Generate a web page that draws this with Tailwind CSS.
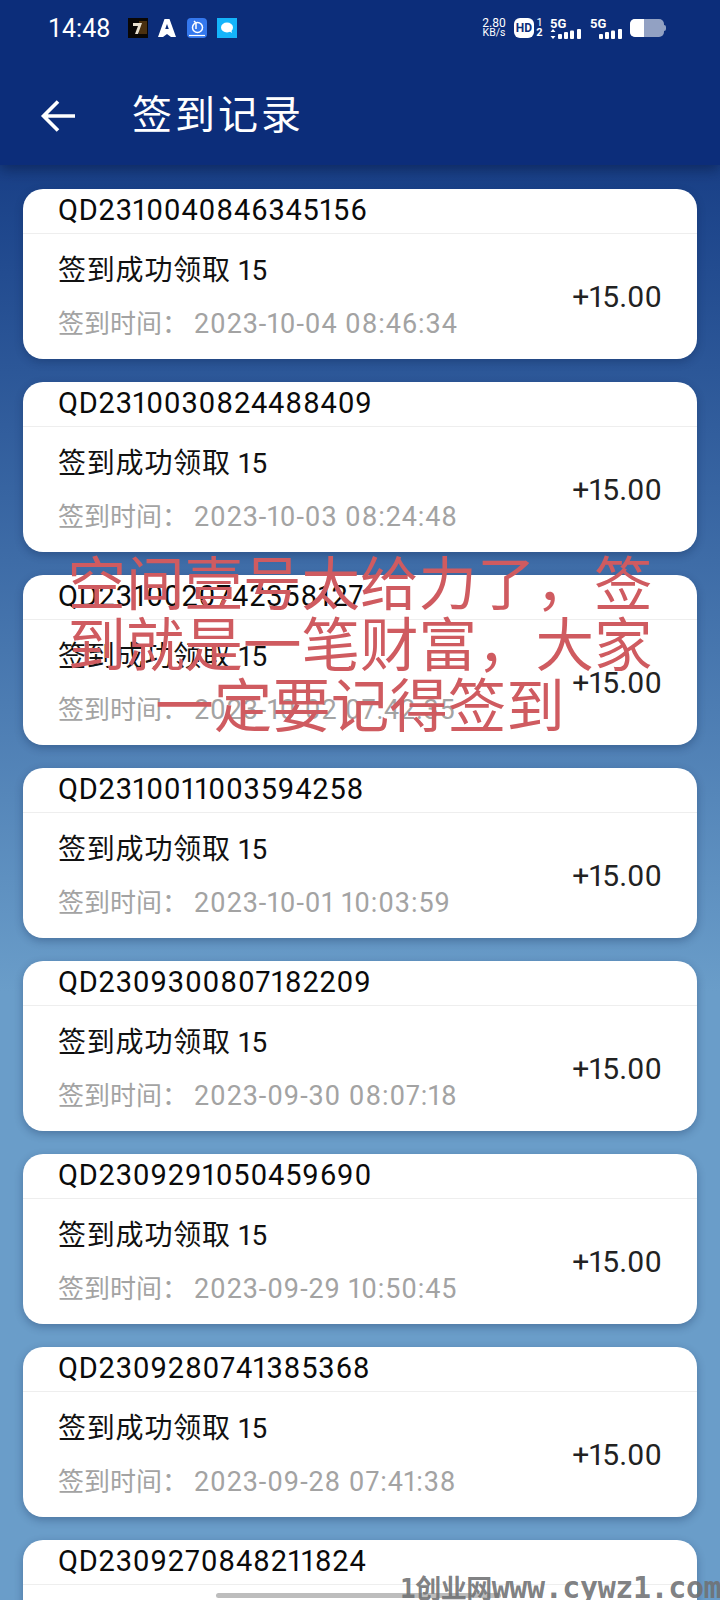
<!doctype html>
<html lang="zh"><head><meta charset="utf-8"><script src="https://cdn.jsdelivr.net/npm/@tailwindcss/browser@4"></script></head>
<body class="m-0">
<div class="relative w-[720px] h-[1600px] overflow-hidden bg-gradient-to-b from-[#0c2d7a] via-[#6a9dc9] via-[62%] to-[#6a9dc9] font-['Roboto','Noto_Sans_CJK_SC',sans-serif]">
  <header class="relative z-10 h-[165px] bg-[#0c2d7a] shadow-[0_4px_14px_rgba(5,20,60,0.55)] text-white">
    <div class="h-[56px] flex items-center pl-[48px] pr-[54px]">
      <span class="text-[25px] w-[80px] leading-none">14:48</span>
      <div class="flex items-center gap-[10px]">
        <svg width="20" height="20" viewBox="0 0 20 20"><rect width="20" height="20" fill="#0a0705"/><rect x="11" y="3" width="8" height="13" fill="#4a3010"/><path d="M5 5h9l-4 11H7l3-8H5z" fill="#e9e0cf"/></svg>
        <svg width="20" height="20" viewBox="0 0 20 20" class="-ml-[1px]"><path d="M7.500 1h5L19 19h-5l-4-3-4 3H1z" fill="#fff"/><path d="M10 6l-1.800 5h3.600z" fill="#0c2d7a"/></svg>
        <svg width="20" height="20" viewBox="0 0 20 20"><rect width="20" height="20" rx="4" fill="#3478ee"/><circle cx="10.500" cy="9.500" r="5" fill="none" stroke="#fff" stroke-width="1.500"/><path d="M7 3l2 2v6" fill="none" stroke="#fff" stroke-width="1.500"/><path d="M2 17.500h16" stroke="#fff" stroke-width="1.200"/></svg>
        <svg width="20" height="20" viewBox="0 0 20 20"><rect width="20" height="20" fill="#14b4fb"/><ellipse cx="10" cy="9.500" rx="6" ry="5" fill="#fff"/><path d="M12 13l3 2-1-4z" fill="#fff"/></svg>
      </div>
      <div class="ml-auto flex items-center">
        <div class="flex flex-col items-center text-[12px] leading-[10px] w-[28px] mr-[6px]"><span>2.80</span><span class="text-[10.500px]">KB/s</span></div>
        <span class="w-[20px] h-[20px] rounded-[6px] bg-white text-[#0c2d7a] text-[12px] font-bold leading-[20px] text-center">HD</span>
        <div class="flex flex-col items-center text-[11px] font-bold leading-[10px] w-[9px] ml-[1px] mr-[6px]"><span class="font-normal">1</span><span>2</span></div>
        <div class="flex flex-col w-[34px] mr-[6px]">
          <span class="text-[13px] font-bold leading-[11px]">5G</span>
          <svg width="34" height="10" viewBox="0 0 34 10" fill="#fff"><path d="M3 0l2.500 3h-5zM3 10L.5 7h5z"/><rect x="8" y="5" width="4" height="5" rx="1"/><rect x="14" y="3" width="4" height="7" rx="1"/><rect x="20" y="1.500" width="4" height="8.500" rx="1"/><rect x="27" y="0" width="4" height="10" rx="1"/></svg>
        </div>
        <div class="flex flex-col w-[34px] mr-[6px]">
          <span class="text-[13px] font-bold leading-[11px]">5G</span>
          <svg width="34" height="10" viewBox="0 0 34 10" fill="#fff"><rect x="9" y="5" width="4" height="5" rx="1"/><rect x="15" y="3" width="4" height="7" rx="1"/><rect x="21" y="1.500" width="4" height="8.500" rx="1"/><rect x="28" y="0" width="4" height="10" rx="1"/></svg>
        </div>
        <div class="relative w-[34px] h-[18px] rounded-[5px] bg-white/55 overflow-hidden"><div class="w-[14px] h-full bg-white"></div></div>
        <div class="w-[2px] h-[6px] bg-white/55 rounded-r-sm"></div>
      </div>
    </div>
    <div class="h-[109px] flex items-center pt-[10px]">
      <svg class="ml-[40px]" width="36" height="34" viewBox="0 0 36 34" fill="none" stroke="#fff" stroke-width="3.600"><path d="M35 17H4M18 2.500 3.500 17 18 31.500"/></svg>
      <h1 class="ml-[56px] text-[40px] font-normal tracking-[3px] leading-none">签到记录</h1>
    </div>
  </header>
  <main class="flex flex-col gap-[23px] px-[23px] pt-[24px] proportional-nums">
    <section class="h-[170px] shrink-0 rounded-[20px] bg-white shadow-[0_3px_8px_rgba(10,30,70,0.3)] overflow-hidden">
      <div class="h-[45px] border-b border-[#eeeeee] pl-[35px] text-[29px] tracking-[0.800px] leading-[42px] text-[#0a0a0a]">QD2310040846345156</div>
      <div class="flex items-center justify-between pl-[35px] pr-[35px] h-[125px]"><div><p class="text-[28px] tracking-[0.800px] leading-[38px] text-[#111]">签到成功领取 15</p><p class="mt-[16px] text-[26px] leading-[36px] text-[#a3a3a3]">签到时间：<span class="ml-[6px] text-[27px] tracking-[0.900px]">2023-10-04 08:46:34</span></p></div><span class="text-[30px] text-[#222]">+15.00</span></div>
    </section>
    <section class="h-[170px] shrink-0 rounded-[20px] bg-white shadow-[0_3px_8px_rgba(10,30,70,0.3)] overflow-hidden">
      <div class="h-[45px] border-b border-[#eeeeee] pl-[35px] text-[29px] tracking-[0.800px] leading-[42px] text-[#0a0a0a]">QD2310030824488409</div>
      <div class="flex items-center justify-between pl-[35px] pr-[35px] h-[125px]"><div><p class="text-[28px] tracking-[0.800px] leading-[38px] text-[#111]">签到成功领取 15</p><p class="mt-[16px] text-[26px] leading-[36px] text-[#a3a3a3]">签到时间：<span class="ml-[6px] text-[27px] tracking-[0.900px]">2023-10-03 08:24:48</span></p></div><span class="text-[30px] text-[#222]">+15.00</span></div>
    </section>
    <section class="h-[170px] shrink-0 rounded-[20px] bg-white shadow-[0_3px_8px_rgba(10,30,70,0.3)] overflow-hidden">
      <div class="h-[45px] border-b border-[#eeeeee] pl-[35px] text-[29px] tracking-[0.800px] leading-[42px] text-[#0a0a0a]">QD2310020742358127</div>
      <div class="flex items-center justify-between pl-[35px] pr-[35px] h-[125px]"><div><p class="text-[28px] tracking-[0.800px] leading-[38px] text-[#111]">签到成功领取 15</p><p class="mt-[16px] text-[26px] leading-[36px] text-[#a3a3a3]">签到时间：<span class="ml-[6px] text-[27px] tracking-[0.900px]">2023-10-02 07:42:35</span></p></div><span class="text-[30px] text-[#222]">+15.00</span></div>
    </section>
    <section class="h-[170px] shrink-0 rounded-[20px] bg-white shadow-[0_3px_8px_rgba(10,30,70,0.3)] overflow-hidden">
      <div class="h-[45px] border-b border-[#eeeeee] pl-[35px] text-[29px] tracking-[0.800px] leading-[42px] text-[#0a0a0a]">QD2310011003594258</div>
      <div class="flex items-center justify-between pl-[35px] pr-[35px] h-[125px]"><div><p class="text-[28px] tracking-[0.800px] leading-[38px] text-[#111]">签到成功领取 15</p><p class="mt-[16px] text-[26px] leading-[36px] text-[#a3a3a3]">签到时间：<span class="ml-[6px] text-[27px] tracking-[0.900px]">2023-10-01 10:03:59</span></p></div><span class="text-[30px] text-[#222]">+15.00</span></div>
    </section>
    <section class="h-[170px] shrink-0 rounded-[20px] bg-white shadow-[0_3px_8px_rgba(10,30,70,0.3)] overflow-hidden">
      <div class="h-[45px] border-b border-[#eeeeee] pl-[35px] text-[29px] tracking-[0.800px] leading-[42px] text-[#0a0a0a]">QD2309300807182209</div>
      <div class="flex items-center justify-between pl-[35px] pr-[35px] h-[125px]"><div><p class="text-[28px] tracking-[0.800px] leading-[38px] text-[#111]">签到成功领取 15</p><p class="mt-[16px] text-[26px] leading-[36px] text-[#a3a3a3]">签到时间：<span class="ml-[6px] text-[27px] tracking-[0.900px]">2023-09-30 08:07:18</span></p></div><span class="text-[30px] text-[#222]">+15.00</span></div>
    </section>
    <section class="h-[170px] shrink-0 rounded-[20px] bg-white shadow-[0_3px_8px_rgba(10,30,70,0.3)] overflow-hidden">
      <div class="h-[45px] border-b border-[#eeeeee] pl-[35px] text-[29px] tracking-[0.800px] leading-[42px] text-[#0a0a0a]">QD2309291050459690</div>
      <div class="flex items-center justify-between pl-[35px] pr-[35px] h-[125px]"><div><p class="text-[28px] tracking-[0.800px] leading-[38px] text-[#111]">签到成功领取 15</p><p class="mt-[16px] text-[26px] leading-[36px] text-[#a3a3a3]">签到时间：<span class="ml-[6px] text-[27px] tracking-[0.900px]">2023-09-29 10:50:45</span></p></div><span class="text-[30px] text-[#222]">+15.00</span></div>
    </section>
    <section class="h-[170px] shrink-0 rounded-[20px] bg-white shadow-[0_3px_8px_rgba(10,30,70,0.3)] overflow-hidden">
      <div class="h-[45px] border-b border-[#eeeeee] pl-[35px] text-[29px] tracking-[0.800px] leading-[42px] text-[#0a0a0a]">QD2309280741385368</div>
      <div class="flex items-center justify-between pl-[35px] pr-[35px] h-[125px]"><div><p class="text-[28px] tracking-[0.800px] leading-[38px] text-[#111]">签到成功领取 15</p><p class="mt-[16px] text-[26px] leading-[36px] text-[#a3a3a3]">签到时间：<span class="ml-[6px] text-[27px] tracking-[0.900px]">2023-09-28 07:41:38</span></p></div><span class="text-[30px] text-[#222]">+15.00</span></div>
    </section>
    <section class="h-[170px] shrink-0 rounded-[20px] bg-white shadow-[0_3px_8px_rgba(10,30,70,0.3)] overflow-hidden">
      <div class="h-[45px] border-b border-[#eeeeee] pl-[35px] text-[29px] tracking-[0.800px] leading-[42px] text-[#0a0a0a]">QD2309270848211824</div>
    </section>
  </main>
  <div class="absolute z-20 left-[40px] top-[555px] w-[640px] text-center text-[58.500px] leading-[61px] text-[#cf5b60]">空间壹号太给力了，签<br>到就是一笔财富，大家<br>一定要记得签到</div>
  <div class="absolute left-[216px] top-[1593px] w-[285px] h-[5px] rounded-full bg-[#bdbdbd]"></div>
  <div class="absolute z-30 left-[400px] top-[1573px] text-[30px] leading-[30px] font-semibold text-[#6f7173]/90 font-['DejaVu_Sans_Mono','Noto_Sans_CJK_SC',monospace] tracking-[-0.400px] whitespace-nowrap"><span class="text-[26px] tracking-[-0.500px]">1创业网</span>www.cywz1.com</div>
</div>
</body></html>
